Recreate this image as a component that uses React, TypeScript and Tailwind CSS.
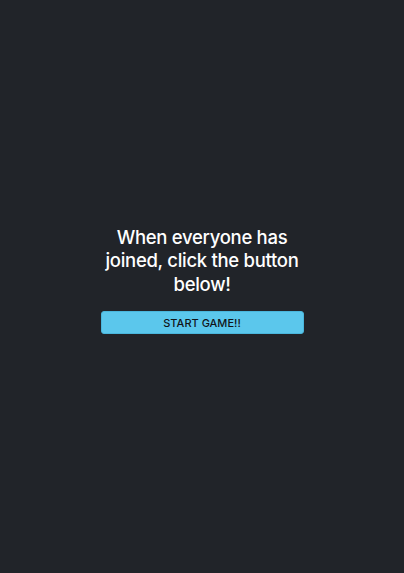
export default function App() {
  return (
    <div className="flex h-[573px] w-full items-center justify-center bg-[#212429] font-['Inter',sans-serif]">
      <div className="mt-[-13px] flex w-[203px] flex-col items-center">
        <h1 className="w-[210px] shrink-0 text-center text-[18.5px] font-medium leading-[23.5px] tracking-[-0.3px] text-white">
          When everyone has joined, click the button below!
        </h1>
        <button className="mt-[15px] h-[23px] w-full rounded-[3px] border border-[#4ab6dc] bg-[#5bc7ec] text-[11px] font-medium text-[#111418]">
          START GAME!!
        </button>
      </div>
    </div>
  );
}
